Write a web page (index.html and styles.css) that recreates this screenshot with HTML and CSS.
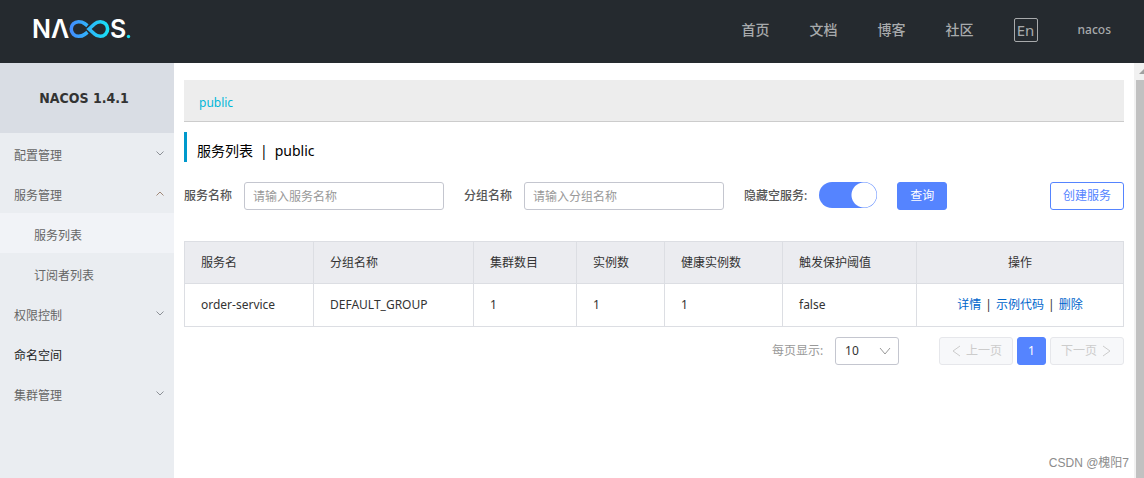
FILE: index.html
```html
<!DOCTYPE html>
<html lang="zh-CN">
<head>
<meta charset="utf-8">
<meta name="viewport" content="width=device-width, initial-scale=1">
<title>Nacos</title>
<link rel="stylesheet" href="styles.css">
</head>
<body>
<header class="header">
  <a class="logo" href="#" aria-label="NACOS">
    <svg width="104" height="40" viewBox="-2 -8 104 40">
      <defs>
        <linearGradient id="loop" gradientUnits="userSpaceOnUse" x1="36" y1="0" x2="76" y2="0">
          <stop offset="0" stop-color="#4589ff"/>
          <stop offset="1" stop-color="#17e2f5"/>
        </linearGradient>
      </defs>
      <text class="logo-letter" x="-1" y="21">N</text>
      <text class="logo-letter" x="18" y="21">Λ</text>
      <path d="M54.500 8.800L51.500 6.500C50 5.300 48 4.700 45.500 4.700A7.300 7.300 0 0 0 45.500 19.300C48 19.300 50 18.700 51.500 17.500L54.500 15.200M56 12L61.500 7C63 5.500 65 4.700 67.300 4.700A7.300 7.300 0 0 1 67.300 19.300C65 19.300 63 18.500 61.500 17Z" fill="none" stroke="url(#loop)" stroke-width="3.600"/>
      <text class="logo-letter" x="77" y="21">S</text>
      <circle cx="95.500" cy="19.500" r="1.700" fill="#17e2f5"/>
    </svg>
  </a>
  <nav class="nav">
    <a href="#">首页</a>
    <a href="#">文档</a>
    <a href="#">博客</a>
    <a href="#">社区</a>
    <button class="lang" type="button">En</button>
    <a class="user" href="#">nacos</a>
  </nav>
</header>
<div class="body">
  <aside class="sidebar">
    <h1 class="version">NACOS 1.4.1</h1>
    <nav class="menu">
      <a href="#">配置管理<svg class="arrow" viewBox="0 0 8 5"><path d="M0.500 0.500L4 4L7.500 0.500"/></svg></a>
      <a href="#">服务管理<svg class="arrow arrow-open" viewBox="0 0 8 5"><path d="M0.500 4.500L4 1L7.500 4.500"/></svg></a>
      <a class="sub active" href="#">服务列表</a>
      <a class="sub" href="#">订阅者列表</a>
      <a href="#">权限控制<svg class="arrow" viewBox="0 0 8 5"><path d="M0.500 0.500L4 4L7.500 0.500"/></svg></a>
      <a class="leaf" href="#">命名空间</a>
      <a href="#">集群管理<svg class="arrow" viewBox="0 0 8 5"><path d="M0.500 0.500L4 4L7.500 0.500"/></svg></a>
    </nav>
  </aside>
  <main class="main">
    <div class="namespaces"><a href="#">public</a></div>
    <h2 class="title"><span>服务列表</span><span>|</span><span>public</span></h2>
    <form class="filters">
      <label for="service">服务名称</label>
      <input class="field" id="service" type="text" placeholder="请输入服务名称">
      <label for="group">分组名称</label>
      <input class="field" id="group" type="text" placeholder="请输入分组名称">
      <label for="hide">隐藏空服务:</label>
      <input class="switch" id="hide" type="checkbox" role="switch" checked>
      <button class="btn primary" type="button">查询</button>
      <button class="btn outline" type="button">创建服务</button>
    </form>
    <table class="table">
      <colgroup><col class="c1"><col class="c2"><col class="c3"><col class="c4"><col class="c5"><col class="c6"><col></colgroup>
      <thead>
        <tr><th>服务名</th><th>分组名称</th><th>集群数目</th><th>实例数</th><th>健康实例数</th><th>触发保护阈值</th><th class="ops">操作</th></tr>
      </thead>
      <tbody>
        <tr><td>order-service</td><td>DEFAULT_GROUP</td><td>1</td><td>1</td><td>1</td><td>false</td><td class="ops"><a href="#">详情</a><i>|</i><a href="#">示例代码</a><i>|</i><a href="#">删除</a></td></tr>
      </tbody>
    </table>
    <div class="pager">
      <label for="size">每页显示:</label>
      <span class="select">
        <select id="size"><option>10</option><option>20</option></select>
        <svg width="12" height="8" viewBox="0 0 12 8"><path d="M1 1L6 7L11 1"/></svg>
      </span>
      <div class="pages">
        <button class="page" type="button" disabled><svg width="9" height="12" viewBox="0 0 9 12"><path d="M8 1L1 6L8 11"/></svg>上一页</button>
        <button class="page current" type="button">1</button>
        <button class="page next" type="button" disabled>下一页<svg width="9" height="12" viewBox="0 0 9 12"><path d="M1 1L8 6L1 11"/></svg></button>
      </div>
    </div>
  </main>
  <div class="scrollbar"><svg width="8" height="17" viewBox="0 0 8 17"><path d="M3 11L8 6V11Z" fill="#a0a0a0"/></svg><div class="thumb"></div></div>
</div>
<div class="watermark">CSDN @槐阳7</div>
</body>
</html>
```

FILE: styles.css
```css
* { box-sizing: border-box; }
body {
  margin: 0;
  min-height: 100vh;
  display: flex;
  flex-direction: column;
  background: #fff;
  color: #333;
  font: 12px/20px "Noto Sans", "Noto Sans CJK SC", sans-serif;
}
a { color: inherit; text-decoration: none; }
button, input, select { font: inherit; }
button { cursor: pointer; }

.header {
  height: 63px;
  padding: 0 33px 0 31px;
  display: flex;
  justify-content: space-between;
  background: #252a2f;
  color: #a8aaac;
}
.logo { padding-top: 9px; }
.logo svg { display: block; }
.logo-letter { font: 600 25px Inter, sans-serif; fill: #fff; }
.nav {
  height: 60px;
  display: flex;
  align-items: center;
  gap: 40px;
  font-size: 14px;
  font-weight: 500;
}
.lang {
  width: 24px;
  height: 24px;
  padding: 0;
  border: 1px solid #a8aaac;
  border-radius: 2px;
  background: none;
  color: inherit;
  font-size: 15px;
  font-weight: 400;
  line-height: 20px;
}
.user { font-size: 12px; }

.body { flex: 1; display: flex; }
.sidebar { width: 174px; flex: none; background: #eaedf1; }
.version {
  margin: 0;
  padding-right: 6px;
  background: #d9dde4;
  font: bold 14px/70px "DejaVu Sans Condensed", "DejaVu Sans", sans-serif;
  text-align: center;
}
.menu a {
  display: flex;
  align-items: center;
  justify-content: space-between;
  height: 40px;
  padding: 6px 10px 0 14px;
  color: #666;
}
.menu .sub { padding-left: 34px; }
.menu .active { background: #f1f3f7; }
.menu .leaf { color: #222; }
.arrow {
  width: 8px;
  height: 5px;
  margin-bottom: 6px;
  fill: none;
  stroke: #8c9096;
}
.arrow-open { stroke: #a08878; }

.main { flex: 1; min-width: 0; padding: 17px 10px; }
.namespaces {
  padding: 13px 15px 8px;
  background: #ededed;
  border-bottom: 1px solid #ccc;
  color: #00b7d9;
}
.title {
  display: flex;
  gap: 7px;
  margin: 10px 0 20px;
  padding: 8px 0 0 10px;
  border-left: 3px solid #09c;
  color: #000;
  font-size: 14px;
  font-weight: 400;
  line-height: 22px;
}
.filters { display: flex; align-items: center; height: 28px; }
.filters label { margin-right: 12px; color: #555; font-weight: 500; }
.field {
  width: 200px;
  height: 28px;
  margin-right: 20px;
  padding: 0 8px;
  border: 1px solid #c4c6cf;
  border-radius: 3px;
  color: #333;
}
.field::placeholder { color: #999; }
.switch {
  appearance: none;
  width: 58px;
  height: 26px;
  margin: 0 20px 2px 0;
  border-radius: 13px;
  background: radial-gradient(circle at 45px 13px, #fff 12px, #5584ff 13px);
}
.btn {
  height: 28px;
  padding: 0 12px;
  border: 1px solid #5584ff;
  border-radius: 3px;
}
.primary { background: #5584ff; color: #fff; }
.outline { margin-left: auto; background: #fff; color: #5584ff; }

.table {
  width: 100%;
  margin-top: 31px;
  border-collapse: collapse;
  table-layout: fixed;
}
.c1 { width: 129px; }
.c2 { width: 160px; }
.c3 { width: 103px; }
.c4 { width: 88px; }
.c5 { width: 118px; }
.c6 { width: 134px; }
.table th, .table td {
  height: 43px;
  padding: 0 16px;
  border: 1px solid #dcdee3;
  font-weight: 400;
  text-align: left;
}
.table th { height: 42px; background: #ebecf0; }
.table .ops { text-align: center; }
.ops a { color: #06c; }
.ops i { margin: 0 4px; font-style: normal; }

.pager {
  display: flex;
  align-items: center;
  justify-content: flex-end;
  margin-top: 10px;
  color: #999;
}
.select { position: relative; margin: 0 40px 0 12px; }
.select select {
  appearance: none;
  display: block;
  width: 64px;
  height: 28px;
  padding: 0 9px;
  border: 1px solid #c4c6cf;
  border-radius: 3px;
  background: #fff;
  color: #333;
}
.select svg { position: absolute; right: 8px; top: 10px; pointer-events: none; }
.select path, .page path { fill: none; stroke: currentColor; }
.pages { display: flex; gap: 4px; }
.page {
  display: flex;
  align-items: center;
  gap: 5px;
  height: 28px;
  padding: 0 10px 0 12px;
  border: 1px solid #e6e7eb;
  border-radius: 3px;
  background: #f7f8fa;
  color: #ccc;
}
.next { padding: 0 12px 0 10px; }
.current { padding: 0 10px; border-color: #5584ff; background: #5584ff; color: #fff; }

.scrollbar { width: 10px; flex: none; display: flex; flex-direction: column; padding-left: 2px; background: #f1f1f1; }
.scrollbar svg { flex: none; }
.thumb { flex: 1; background: #c1c1c1; }
.watermark {
  position: absolute;
  right: 15px;
  bottom: 5px;
  color: #8c8c8c;
  font-family: "Liberation Sans", "Noto Sans CJK SC", sans-serif;
}
```
